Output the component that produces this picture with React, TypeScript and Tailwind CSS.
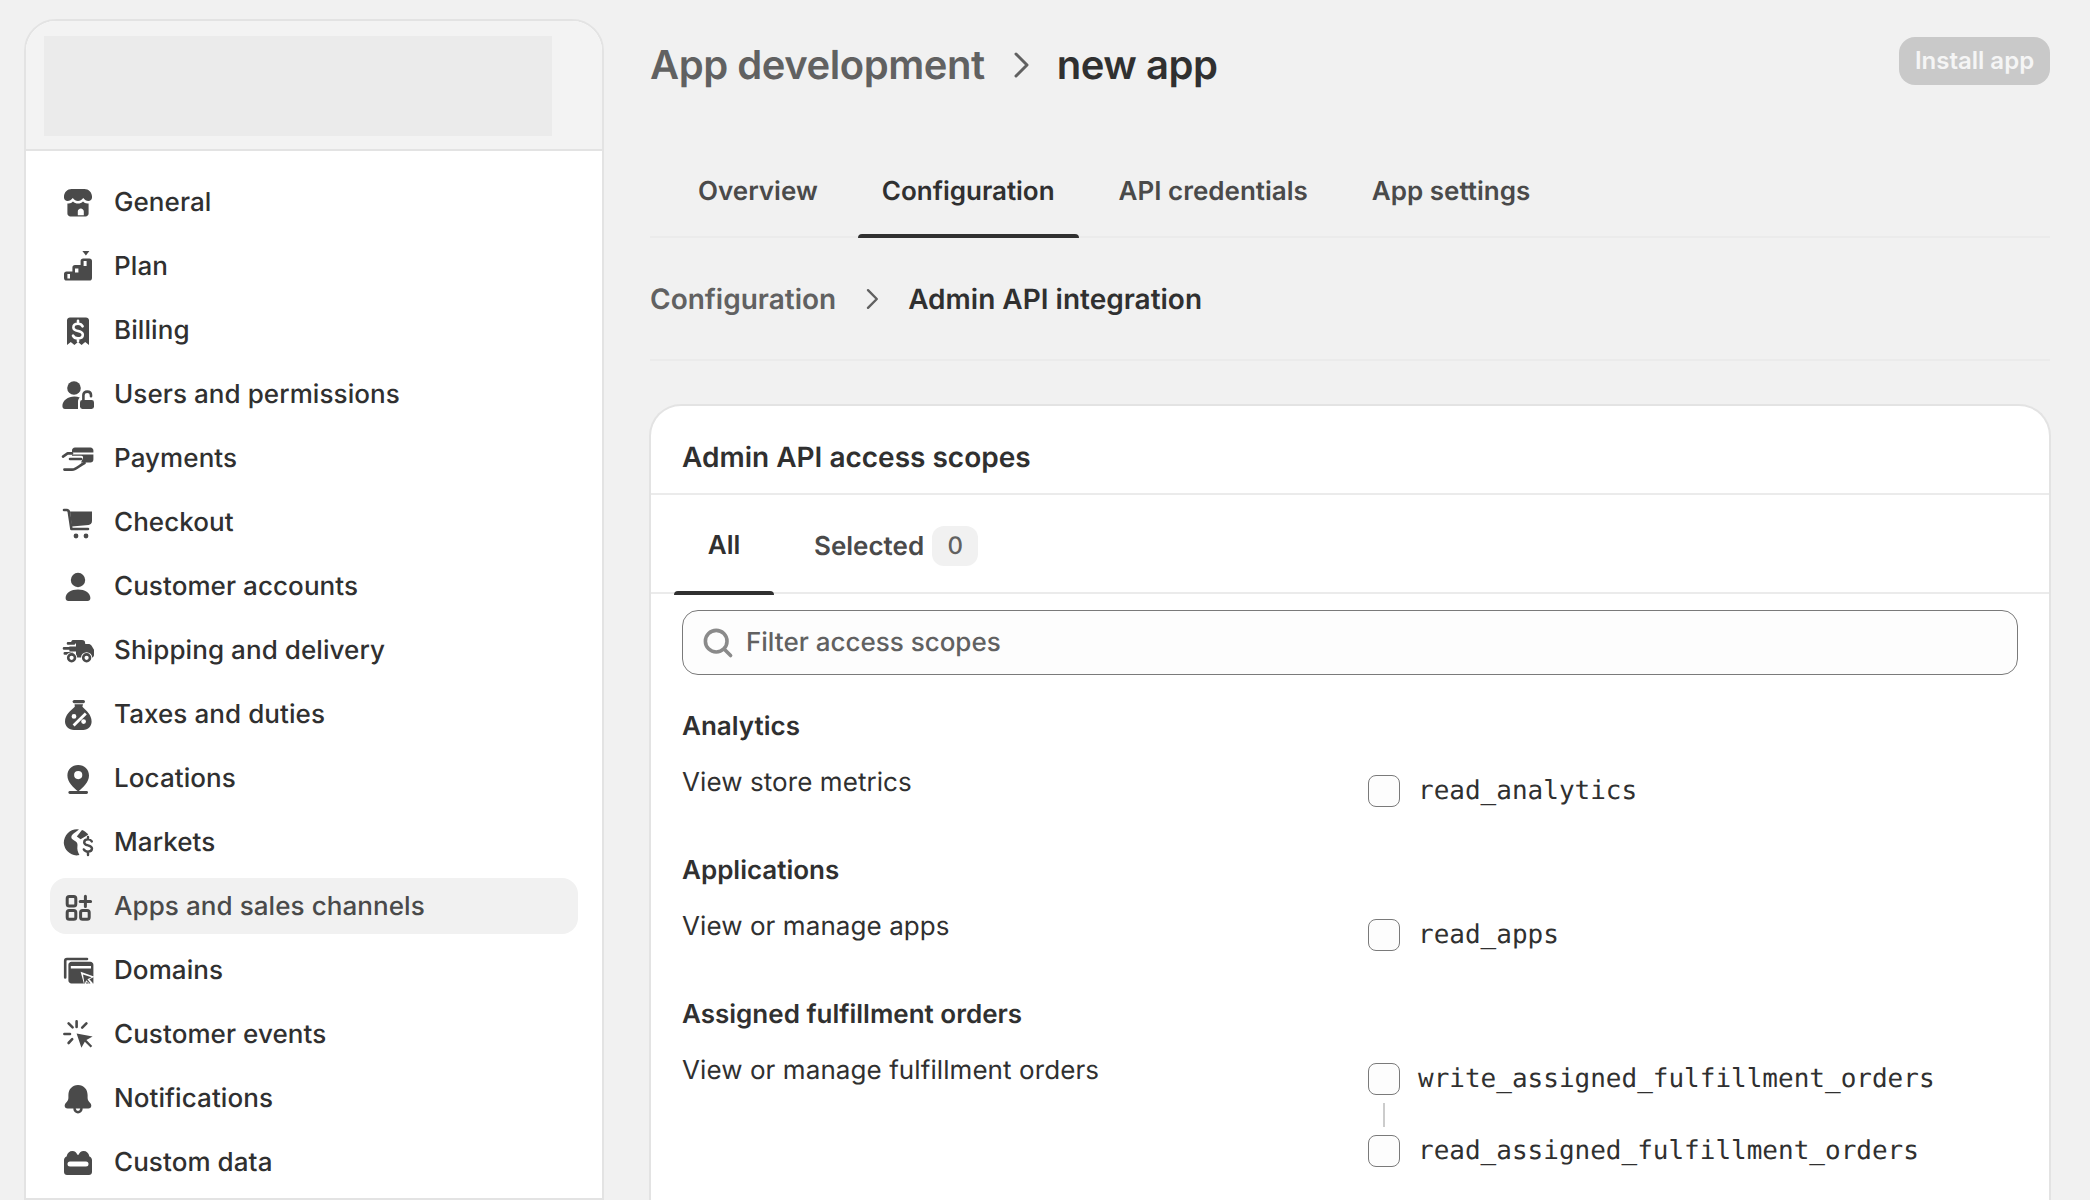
import React from "react";

const P = ({ d }: { d: string }) => <path d={d} fillRule="evenodd" clipRule="evenodd" />;
const S = ({ d, w = 1.5, c = "#4a4a4a" }: { d: string; w?: number; c?: string }) => (
  <path d={d} fill="none" stroke={c} strokeWidth={w} strokeLinecap="round" strokeLinejoin="round" />
);

const dollar = "M12.300 7.700c-.4-.9-1.200-1.300-2.300-1.300-1.400 0-2.300.7-2.300 1.800 0 2.500 4.700 1.200 4.700 3.700 0 1.200-1 1.800-2.400 1.800-1.200 0-2.100-.5-2.500-1.400M10 4.900v1.500M10 13.700v1.400";

const icons: Record<string, React.ReactNode> = {
  General: (
    <>
      <P d="M6.800 3h6.400C15.300 3 17 4.700 17 6.800v.4c0 1-.8 1.800-1.800 1.800-1 0-1.800-.5-2.600-1.500C11.900 8.500 11 9 10 9s-1.900-.5-2.600-1.500C6.600 8.500 5.800 9 4.800 9 3.800 9 3 8.200 3 7.200v-.4C3 4.700 4.700 3 6.800 3z" />
      <P d="M4.700 10.200c1.300.2 2.100-.2 2.800-.9.700.7 1.500 1 2.500 1s1.800-.3 2.500-1c.7.7 1.500 1.100 2.800.9v5.100c0 .8-.7 1.500-1.500 1.500H6.200c-.8 0-1.500-.7-1.500-1.500v-5.100zM11.400 12.700c-.8 0-1.500.7-1.500 1.500v1.900h3v-1.900c0-.8-.7-1.500-1.500-1.500z" />
    </>
  ),
  Plan: (
    <>
      <path d="M12.200 2h3.500l-1.750 2.200z" />
      <P d="M11.300 7c0-.8.500-1.300 1.300-1.300h3.100c.8 0 1.300.5 1.300 1.300v8.500c0 .8-.5 1.300-1.300 1.300H4.300C3.500 16.800 3 16.300 3 15.500v-2c0-.8.500-1.300 1.300-1.300h2.900v-1.900c0-.8.500-1.300 1.300-1.300h2.800V7zm1.500 0h1.500v2.500h-1.500V7zM8.500 10.700h1.700v2.100H8.500v-2.100zM4.700 13.500H6v2.200H4.700v-2.200z" />
    </>
  ),
  Billing: (
    <>
      <path d="M6 3.200h8c.8 0 1.500.6 1.500 1.400V17l-1.900-1.500-1.800 1.500-1.800-1.500-1.800 1.500-1.800-1.500L4.500 17V4.600c0-.8.700-1.400 1.500-1.400z" />
      <S d={dollar} w={1.300} c="#ffffff" />
    </>
  ),
  "Users and permissions": (
    <>
      <circle cx="8" cy="6.500" r="3.400" />
      <path d="M2.200 15.500c0-2.700 2.800-4.700 6-4.700 1 0 1.900.2 2.700.5-.5.500-.9 1.200-.9 2v3.700H3.500c-.8 0-1.300-.6-1.300-1.500z" />
      <rect x="11" y="12.500" width="7" height="4.500" rx="1.200" />
      <S d="M12.700 12.500v-2.500c0-1 .8-1.700 1.900-1.700s1.900.7 1.900 1.700v.6" w={1.300} />
    </>
  ),
  Payments: (
    <>
      <P d="M8.500 4.200h7.700c.9 0 1.500.7 1.500 1.500v4.600c0 .9-.6 1.500-1.500 1.500H11.500l1-2.300c.2-.6-.2-1.100-.8-1.100H7V5.700c0-.8.600-1.500 1.500-1.500zM7 6.800v1h10.700v-1H7z" />
      <S d="M2.500 8.800L4.800 7.200H7M6 10h5.500M3.200 15.300h3.800c2.500 0 3.800-2.300 6.300-3.300" w={1.300} />
    </>
  ),
  Checkout: (
    <>
      <S d="M3 3.500h1.300c.6 0 1 .3 1.100.9L6.700 13h8.300" w={1.300} />
      <path d="M6 4.300h11v4.700c0 1.100-.8 1.800-1.700 2L6.900 11.800z" />
      <circle cx="9" cy="16.500" r="1.200" />
      <circle cx="14" cy="16.500" r="1.200" />
    </>
  ),
  "Customer accounts": (
    <>
      <circle cx="10" cy="6.500" r="3.600" />
      <path d="M3.800 15.500c0-2.600 2.800-4.300 6.200-4.300s6.200 1.700 6.200 4.300c0 1-.6 1.500-1.400 1.500H5.200c-.8 0-1.400-.5-1.400-1.500z" />
    </>
  ),
  "Shipping and delivery": (
    <>
      <path d="M7.500 4.500h4.500c1 0 1.600.6 1.600 1.600v.4h1.500c.8 0 1.300.3 1.700.9l1.200 2v2.600c0 .7-.5 1.300-1.200 1.300H4.500V12h4.500v-1.800H5.700V7.700h3.300V6.200H6.500c0-1 .4-1.700 1-1.700z" />
      <S d="M3 8.700h3.500M3.400 11.200h3.500M5 6.200h3" w={1.300} />
      <circle cx="6.800" cy="13.400" r="2.800" fill="#ffffff" />
      <circle cx="14.300" cy="13.400" r="2.800" fill="#ffffff" />
      <circle cx="6.800" cy="13.400" r="1.700" fill="none" stroke="#4a4a4a" strokeWidth="1.300" />
      <circle cx="14.300" cy="13.400" r="1.700" fill="none" stroke="#4a4a4a" strokeWidth="1.300" />
    </>
  ),
  "Taxes and duties": (
    <>
      <rect x="7.300" y="2.500" width="6.200" height="1.600" rx=".8" />
      <P d="M8.300 4.600h4.200l-.3 1.300c1.900 1.800 4.600 4 4.600 7.400 0 2.400-1.700 4.200-4.200 4.200H8C5.400 17.500 3.500 15.700 3.500 13.300c0-3.400 2.900-5.600 4.900-7.400l-.1-1.300zM8 9.500a1.200 1.200 0 1 0 0 2.400 1.200 1.200 0 0 0 0-2.400zm4.800 2.600a1.200 1.200 0 1 0 0 2.400 1.200 1.200 0 0 0 0-2.400zm.6-3.400l-6.100 6.100 1 1 6.100-6.100-1-1z" />
    </>
  ),
  Locations: (
    <>
      <P d="M10.100 3C7 3 4.700 5.300 4.700 8.200c0 3.300 3 6 5.400 8.100 2.400-2.100 5.400-4.800 5.400-8.100C15.500 5.300 13.200 3 10.100 3zm0 3a2 2 0 1 0 0 4.100 2 2 0 0 0 0-4.100z" />
      <rect x="5.200" y="16" width="9.800" height="1.500" rx=".7" />
    </>
  ),
  Markets: (
    <>
      <path d="M9.500 3.100l1 .1-2 1.500c-.7.500-1.600 1-1.800 2-.2 1.300 1 1.700 2 2.400 1 .6 1.200 1.400 1 2.700-.2 1.400.2 2.700 1 4.200-.5.200-1 .2-1.500.2A6.700 6.700 0 0 1 2.900 10c0-3.800 3-6.900 6.600-6.900z" />
      <path d="M12 3.500c1.300.5 2.400 1.300 3.100 2.400l-3.800 2.200-1.900-1.300z" />
      <S d="M16.900 9.200c-.4-.7-1-1-1.900-1-1.100 0-1.900.6-1.900 1.500 0 2 3.900 1 3.900 3.100 0 1-.8 1.500-2 1.500-1 0-1.700-.4-2.100-1.100M15 7v1.200M15 14.300v1.700" w={1.200} />
    </>
  ),
  "Apps and sales channels": (
    <>
      <rect x="4.600" y="4.800" width="4.300" height="4.700" rx="1" fill="none" stroke="#4a4a4a" strokeWidth="1.500" />
      <rect x="4.600" y="11.800" width="4.300" height="4.300" rx="1" fill="none" stroke="#4a4a4a" strokeWidth="1.500" />
      <rect x="11.300" y="11.800" width="4.300" height="4.300" rx="1" fill="none" stroke="#4a4a4a" strokeWidth="1.500" />
      <S d="M13.700 4.600v5.200M11.100 7.200h5.200" />
    </>
  ),
  Domains: (
    <>
      <S d="M14.500 4H4.500C3.800 4 3.600 4.400 3.600 5v8.200" w={1.300} />
      <P d="M6.700 5.400h9.500c.8 0 1.500.7 1.500 1.500v9.300H6.700c-.8 0-1.500-.7-1.500-1.500V6.900c0-.8.700-1.500 1.500-1.500zm-.3 2.100v1.200h10.100V7.500H6.400z" />
      <path d="M11.300 10.400l7 2.500-2.600 1.200 1.800 2-1.200 1.200-1.900-1.900-1 2.500z" fill="#ffffff" />
      <path d="M12.500 11.800l4.300 1.300-2.100 1 1.500 2-.3.300-1.800-1.800-.8 2z" />
    </>
  ),
  "Customer events": (
    <>
      <path d="M9.300 9.300l8 1.500-3.100 1.700 2.900 3-.8.800-2.900-2.900-1.700 3z" />
      <S d="M9.300 3.200v2.800M5.300 4.200l2 2M14.200 4.200l-2.100 2.100M3.200 9.500h2.800M5.300 14l1.800-1.900" w={1.300} />
    </>
  ),
  Notifications: (
    <>
      <path d="M10 3c2.900 0 4.800 2.200 4.800 5v1.500c0 1 .6 1.800 1.400 2.600.8 1 .6 2.600-1 2.600H4.800c-1.600 0-1.800-1.600-1-2.600C4.600 11.300 5.200 10.500 5.200 9.500V8c0-2.800 1.900-5 4.800-5z" />
      <S d="M8.300 14.900a1.700 1.700 0 0 0 3.400 0" w={1.300} />
    </>
  ),
  "Custom data": (
    <P d="M7.200 4c1.300 0 2 .7 2.500 1.900h.6C10.800 4.700 11.500 4 12.800 4c1.500 0 2.500 1 2.900 2.700.8.300 1.300 1 1.300 1.900v5.900c0 .9-.7 1.500-1.500 1.500h-11c-.8 0-1.500-.6-1.500-1.500V8.600c0-.9.500-1.600 1.300-1.900C4.700 5 5.700 4 7.200 4zM6 9.300a1.250 1.250 0 0 0 0 2.500h8a1.250 1.250 0 0 0 0-2.500H6z" />
  ),
};

const items = Object.keys(icons);

function Check({ label }: { label: string }) {
  return (
    <div className="flex h-[32px] items-center gap-[18px]">
      <div className="h-[32px] w-[32px] rounded-[8px] border border-[#7a7a7a] bg-[#fdfdfd]" />
      <span className="text-[26px] leading-[32px] text-[#303030] font-['DejaVu_Sans_Mono',monospace]">{label}</span>
    </div>
  );
}

function Group({ title, desc, children }: { title: string; desc: string; children: React.ReactNode }) {
  return (
    <div>
      <div className="h-[40px] text-[26px] leading-[40px] font-[600] text-[#303030]">{title}</div>
      <div className="mt-[16px] grid grid-cols-[686px_1fr]">
        <div className="text-[26px] leading-[40px] font-[400] tracking-[0.08px] text-[#303030]">{desc}</div>
        <div className="pt-[12px]">{children}</div>
      </div>
    </div>
  );
}

function Chevron({ className }: { className: string }) {
  return (
    <svg viewBox="0 0 20 20" className={className} fill="none" stroke="#616161" strokeWidth="1.500" strokeLinecap="round" strokeLinejoin="round">
      <path d="M7.500 4.500L13 10l-5.500 5.500" />
    </svg>
  );
}

export default function App() {
  return (
    <div className="flex h-[1200px] w-[2090px] items-start overflow-hidden bg-[#f1f1f1] font-['Inter',sans-serif] antialiased [text-rendering:geometricPrecision]">
      <aside className="ml-[24px] mt-[19px] w-[580px] shrink-0 overflow-hidden rounded-t-[32px] border-[2px] border-[#e3e3e3] bg-white">
        <div className="h-[130px] border-b-[2px] border-[#e3e3e3] bg-[#f3f3f3] pl-[18px] pt-[15px]">
          <div className="h-[100px] w-[508px] bg-[#ebebeb]" />
        </div>
        <nav className="flex flex-col px-[24px] pt-[23px]">
          {items.map((name) => {
            const active = name === "Apps and sales channels";
            return (
              <div key={name} className={`mb-[8px] flex h-[56px] items-center gap-[16px] rounded-[16px] pl-[8px] pt-[2px] text-[26px] leading-[40px] font-[550] tracking-[0.08px] ${active ? "bg-[#f1f1f1] text-[#4a4a4a]" : "text-[#303030]"}`}>
                <svg viewBox="0 0 20 20" className="h-[40px] w-[40px] shrink-0" fill="#4a4a4a">
                  {icons[name]}
                </svg>
                <span>{name}</span>
              </div>
            );
          })}
        </nav>
      </aside>

      <main className="ml-[46px] w-[1400px] shrink-0">
        <header className="flex h-[130px] items-start justify-between">
          <div className="mt-[41px] flex h-[48px] items-center text-[40px] leading-[48px] font-[600] tracking-[-0.45px]">
            <span className="text-[#616161]">App development</span>
            <Chevron className="mx-[16px] h-[40px] w-[40px]" />
            <span className="text-[#303030]">new app</span>
          </div>
          <button className="mt-[37px] flex h-[48px] w-[151px] items-center justify-center rounded-[16px] bg-[#c9c9c9] text-[24px] font-[600] text-[#f5f5f5]">Install app</button>
        </header>

        <div className="flex h-[108px] gap-[16px] border-b-[2px] border-[#ebebeb] pl-[24px]">
          {["Overview", "Configuration", "API credentials", "App settings"].map((t) => (
            <div key={t} className={`relative flex items-center px-[24px] pt-[16px] text-[26px] font-[600] ${t === "Configuration" ? "text-[#303030]" : "text-[#4a4a4a]"}`}>
              {t}
              {t === "Configuration" && <div className="absolute bottom-[-2px] left-0 right-0 h-[4px] rounded-t-[4px] bg-[#303030]" />}
            </div>
          ))}
        </div>

        <div className="flex h-[123px] items-center border-b-[2px] border-[#ebebeb] text-[28px] font-[600]">
          <span className="text-[#616161]">Configuration</span>
          <Chevron className="mx-[20px] h-[32px] w-[32px]" />
          <span className="text-[#303030]">Admin API integration</span>
        </div>

        <section className="-mx-[1px] mt-[43px] h-[900px] rounded-t-[32px] border-[2px] border-b-0 border-[#e3e3e3] bg-white">
          <div className="flex h-[89px] items-center border-b-[2px] border-[#ebebeb] px-[31px] pt-[15px] text-[28px] font-[600] text-[#303030]">Admin API access scopes</div>
          <div className="flex h-[99px] border-b-[2px] border-[#ebebeb] pl-[23px]">
            <div className="relative flex w-[100px] items-center justify-center pt-[4px] text-[26px] font-[600] text-[#303030]">
              All
              <div className="absolute bottom-[-3px] left-0 right-0 h-[4px] rounded-t-[4px] bg-[#303030]" />
            </div>
            <div className="ml-[40px] flex items-center pt-[5px] text-[26px] font-[600] text-[#4a4a4a]">
              Selected
              <span className="ml-[8px] flex h-[40px] w-[46px] items-center justify-center rounded-[12px] bg-[#f1f1f1] text-[24px] font-[450] text-[#616161]">0</span>
            </div>
          </div>
          <div className="px-[31px] pt-[16px]">
            <div className="flex h-[65px] items-center rounded-[16px] border border-[#7a7a7a] bg-[#fdfdfd] pl-[17px]">
              <svg viewBox="0 0 20 20" className="h-[36px] w-[36px]" fill="none" stroke="#8a8a8a" strokeWidth="2" strokeLinecap="round">
                <circle cx="9" cy="9" r="6" />
                <path d="M13.500 13.500L17 17" />
              </svg>
              <span className="ml-[10px] text-[26px] font-[450] text-[#616161]">Filter access scopes</span>
            </div>
            <div className="mt-[32px] flex flex-col gap-[44px]">
              <Group title="Analytics" desc="View store metrics">
                <Check label="read_analytics" />
              </Group>
              <Group title="Applications" desc="View or manage apps">
                <Check label="read_apps" />
              </Group>
              <Group title="Assigned fulfillment orders" desc="View or manage fulfillment orders">
                <Check label="write_assigned_fulfillment_orders" />
                <div className="mb-[8px] ml-[15px] mt-[8px] h-[24px] w-[2px] bg-[#cccccc]" />
                <Check label="read_assigned_fulfillment_orders" />
              </Group>
            </div>
          </div>
        </section>
      </main>
    </div>
  );
}
